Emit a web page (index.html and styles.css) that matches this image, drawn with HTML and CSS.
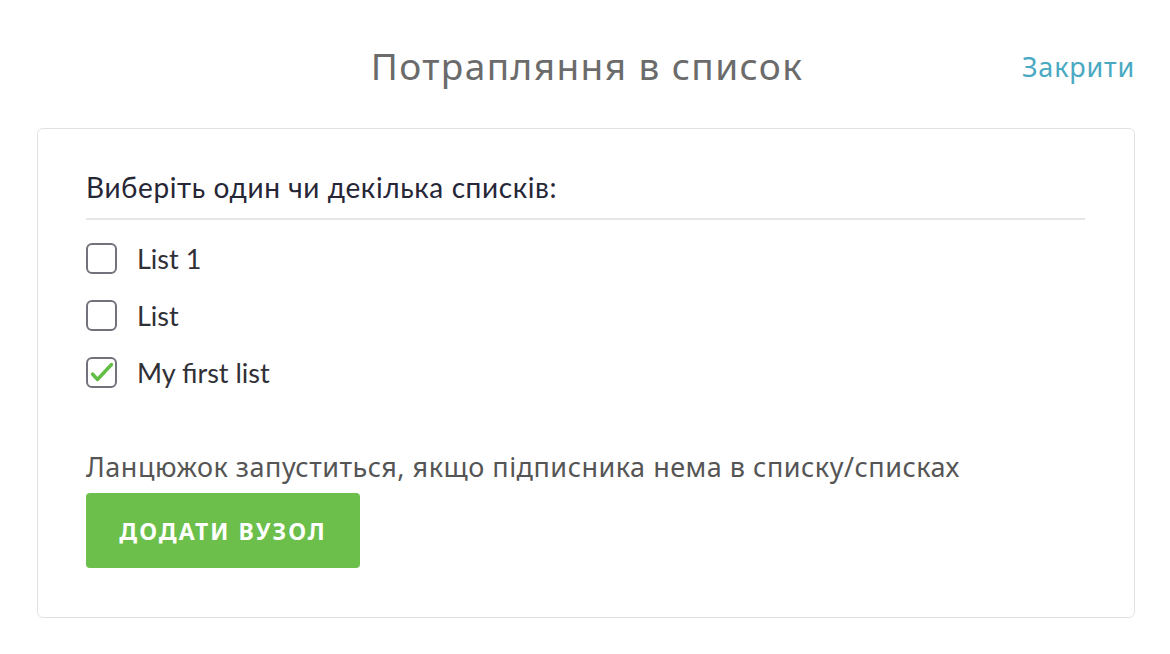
FILE: index.html
```html
<!DOCTYPE html>
<html lang="uk">
<head>
    <meta charset="UTF-8">
    <meta name="viewport" content="width=device-width, initial-scale=1.0">
    <title>Потрапляння в список</title>
    <link rel="stylesheet" href="styles.css">
</head>
<body>
    <div class="page">
        <div class="header">
            <span></span>
            <h1 class="title">Потрапляння в список</h1>
            <a class="close" href="#">Закрити</a>
        </div>
        <div class="card">
            <div class="card-label">Виберіть один чи декілька списків:</div>
            <ul class="list">
                <li class="list-item">
                    <span class="checkbox"></span>
                    <span class="list-name">List 1</span>
                </li>
                <li class="list-item">
                    <span class="checkbox"></span>
                    <span class="list-name">List</span>
                </li>
                <li class="list-item">
                    <span class="checkbox checked">
                        <svg viewBox="0 0 27 27" width="27" height="27">
                            <path d="M4.5 15l5 5.5L23.5 5.5" fill="none" stroke="#62bd45" stroke-width="3.4" stroke-linecap="round" stroke-linejoin="round"/>
                        </svg>
                    </span>
                    <span class="list-name">My first list</span>
                </li>
            </ul>
            <p class="hint">Ланцюжок запуститься, якщо підписника нема в списку/списках</p>
            <button class="add-button">Додати вузол</button>
        </div>
    </div>
</body>
</html>
```

FILE: styles.css
```css
* {
    margin: 0;
    padding: 0;
    box-sizing: border-box;
}

body {
    background: #fff;
    font-family: "Lato", "Noto Sans", sans-serif;
    color: #333;
}

.page {
    padding: 38px 35px 0 37px;
}

.header {
    display: grid;
    grid-template-columns: 1fr auto 1fr;
    align-items: center;
    height: 56px;
}

.title {
    font-family: "Noto Sans", sans-serif;
    font-weight: 400;
    font-size: 37px;
    letter-spacing: 1.4px;
    color: #6b6b6b;
    line-height: 56px;
    margin-left: 2px;
}

.close {
    justify-self: end;
    font-family: "Noto Sans", sans-serif;
    font-size: 27px;
    letter-spacing: 0.8px;
    color: #4aa9c2;
    text-decoration: none;
}

.card {
    margin-top: 34px;
    border: 1px solid #e2e2e2;
    border-radius: 6px;
    padding: 40px 49px 49px 48px;
}

.card-label {
    font-size: 28px;
    letter-spacing: 0.6px;
    line-height: 36px;
    color: #262637;
    padding-bottom: 13px;
    border-bottom: 2px solid #e6e6e6;
}

.list {
    list-style: none;
    margin-top: 10px;
}

.list-item {
    display: flex;
    align-items: center;
    height: 57px;
}

.checkbox {
    width: 31px;
    height: 31px;
    border: 2px solid #72727c;
    border-radius: 6px;
    display: flex;
    align-items: center;
    justify-content: center;
    margin-right: 20px;
}

.list-name {
    font-size: 27px;
    color: #303036;
}

.hint {
    margin-top: 48px;
    font-family: "Noto Sans", sans-serif;
    font-size: 27px;
    letter-spacing: 0.5px;
    line-height: 36px;
    color: #555;
}

.add-button {
    margin-top: 8px;
    width: 274px;
    height: 75px;
    border: none;
    border-radius: 4px;
    background: #6bbf4a;
    color: #fff;
    font-family: "Noto Sans", sans-serif;
    font-weight: 700;
    font-size: 23px;
    letter-spacing: 2px;
    text-transform: uppercase;
    cursor: pointer;
}
```
